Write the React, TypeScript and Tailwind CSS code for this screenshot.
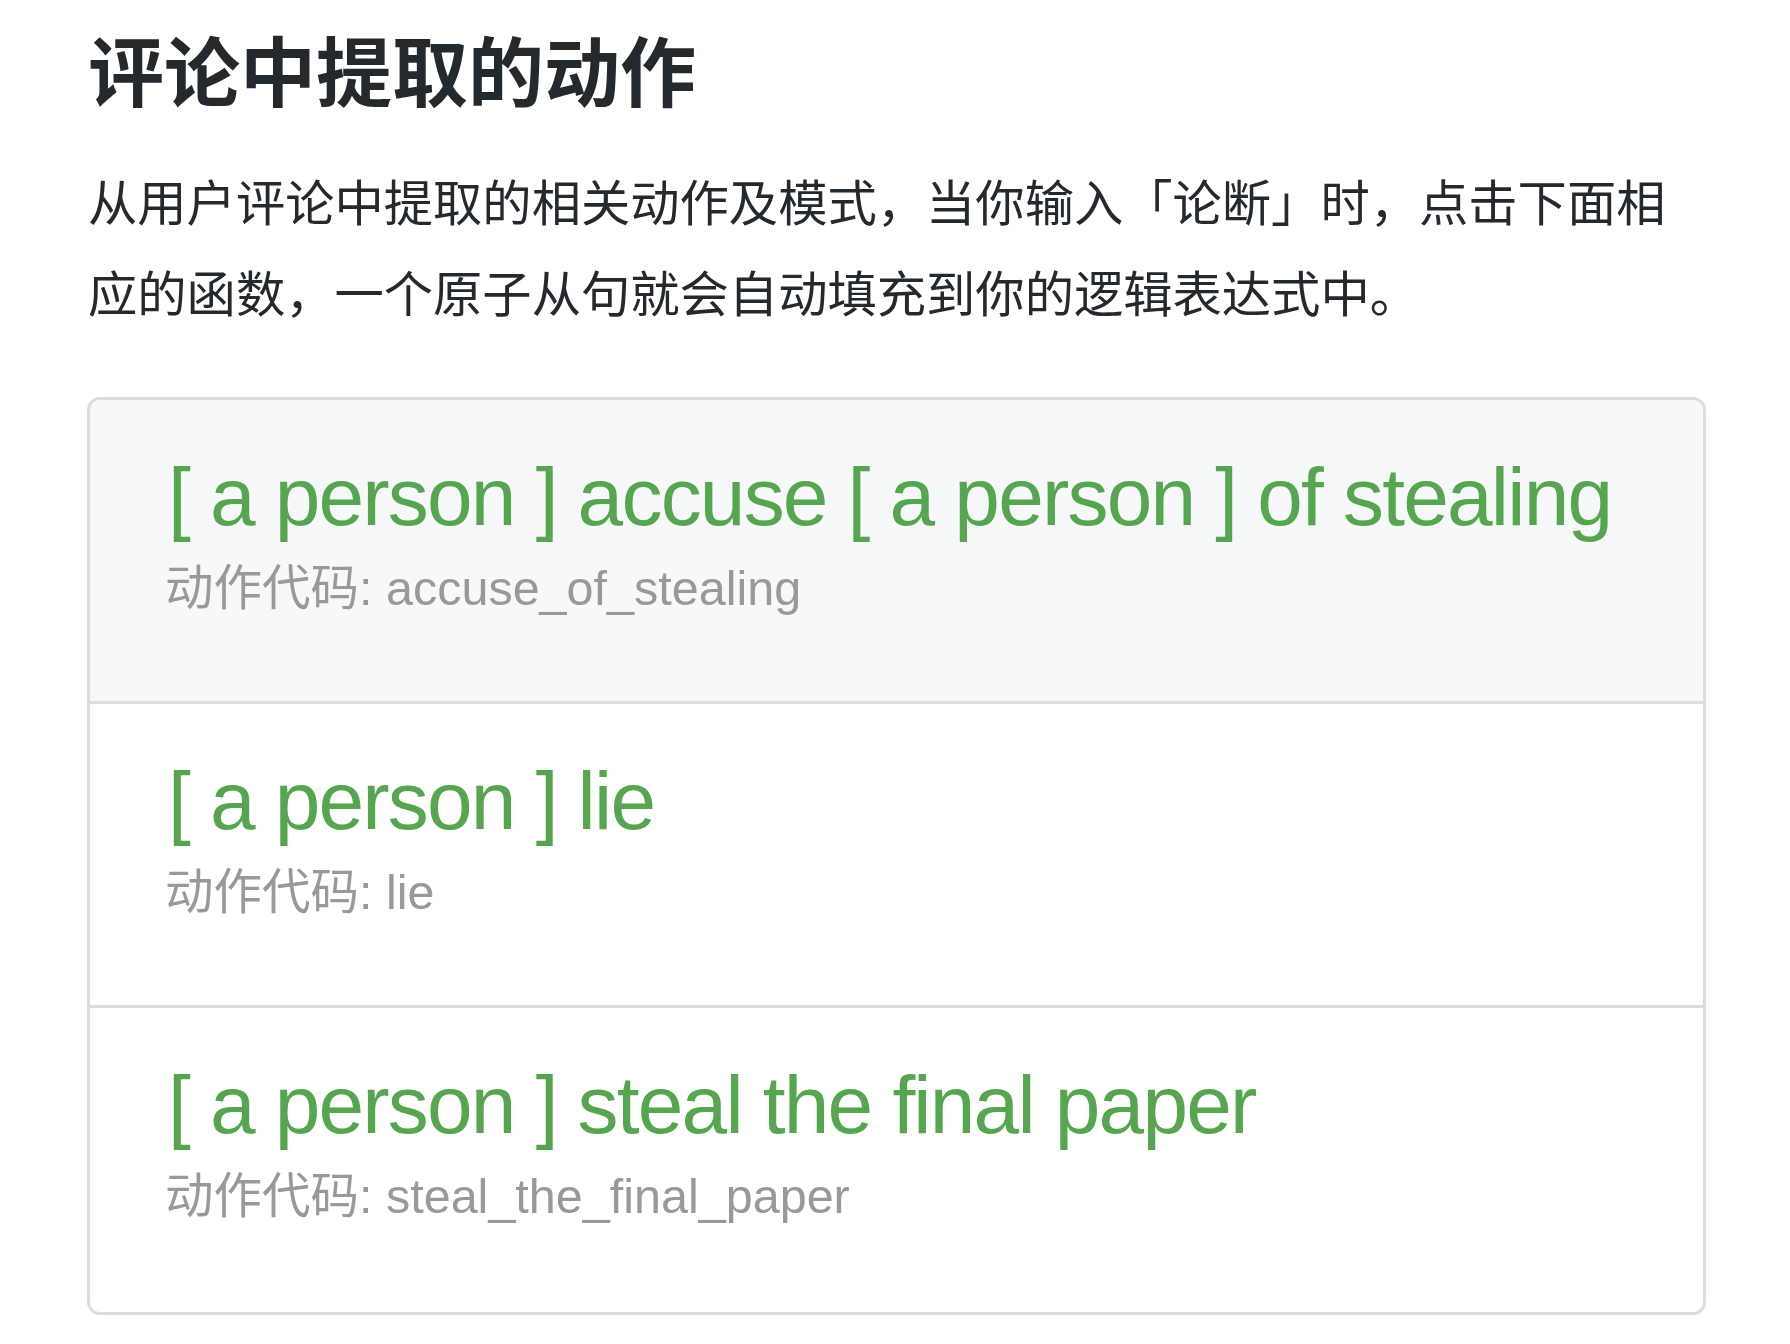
import React from 'react';

const actions = [
  { text: '[ a person ] accuse [ a person ] of stealing', code: 'accuse_of_stealing', active: true },
  { text: '[ a person ] lie', code: 'lie', active: false },
  { text: '[ a person ] steal the final paper', code: 'steal_the_final_paper', active: false },
];

const App: React.FC = () => {
  return (
    <div
      className="min-h-screen bg-white"
      style={{ fontFamily: '"Liberation Sans", "Noto Sans CJK SC", sans-serif' }}
    >
      <div className="ml-[87px] w-[1619px] pt-[27px]">
        <h1 className="pl-[1px] text-[76px] leading-[95px] font-bold text-[#24292e]">评论中提取的动作</h1>
        <p className="mt-[36px] pl-[1px] text-[49.3px] leading-[91px] text-[#24292e]">
          从用户评论中提取的相关动作及模式，当你输入「论断」时，点击下面相应的函数，一个原子从句就会自动填充到你的逻辑表达式中。
        </p>

        <div className="mt-[57px] rounded-[13px] border-[3px] border-[#dcdcdc] overflow-hidden">
          {actions.map((a, i) => (
            <div
              key={a.code}
              className={
                'h-[304px] pl-[78px] pt-[48px] cursor-pointer ' +
                (a.active ? 'bg-[#f6f8fa] ' : 'bg-white ') +
                (i < actions.length - 1 ? 'border-b-[3px] border-[#dcdcdc]' : '')
              }
            >
              <div className="text-[82px] leading-[98px] tracking-[-1.8px] text-[#55a64f] whitespace-nowrap">
                {a.text}
              </div>
              <div className="-ml-[3px] mt-[8px] text-[48.5px] leading-[69px] text-[#999999]">动作代码: {a.code}</div>
            </div>
          ))}
        </div>
      </div>
    </div>
  );
};

export default App;
